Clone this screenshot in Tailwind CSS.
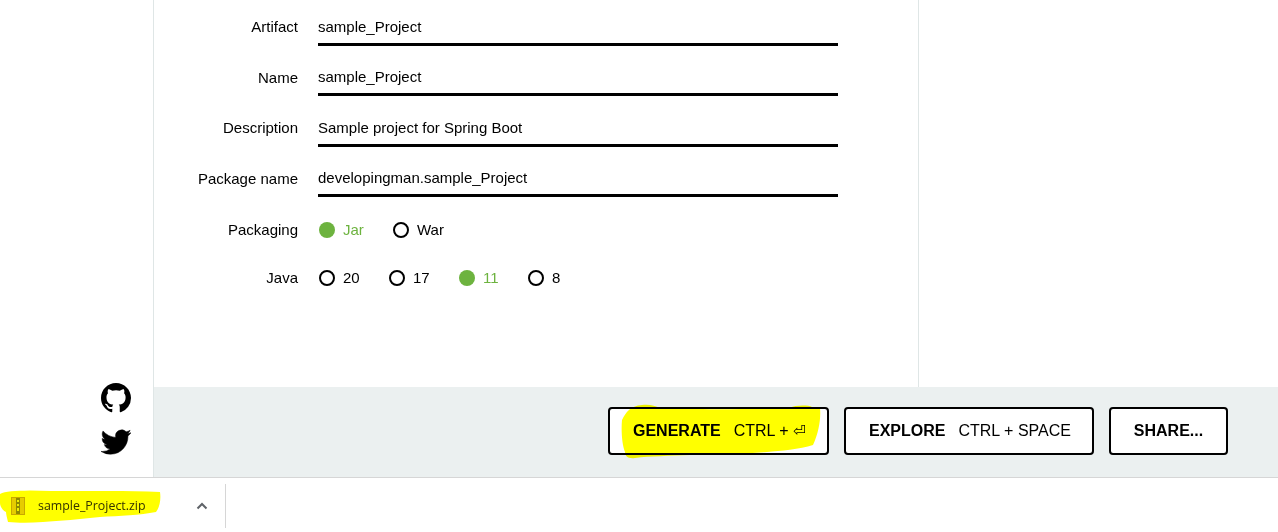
<!DOCTYPE html>
<html>
<head>
<meta charset="utf-8">
<script src="https://cdn.jsdelivr.net/npm/@tailwindcss/browser@4"></script>
</head>
<body class="relative h-[532px] w-[1278px] overflow-hidden bg-white font-['Liberation_Sans',Arial,sans-serif] text-black">
<div class="flex h-[477px]">
  <aside class="flex w-[154px] shrink-0 flex-col items-end border-r border-[#dfe6e6] pr-[22px] pt-[383px]">
    <svg class="h-[30px] w-[30px]" viewBox="0 0 16 16" fill="#000"><path d="M8 0C3.58 0 0 3.58 0 8c0 3.54 2.29 6.53 5.47 7.59.4.07.55-.17.55-.38 0-.19-.01-.82-.01-1.49-2.01.37-2.53-.49-2.69-.94-.09-.23-.48-.94-.82-1.13-.28-.15-.68-.52-.01-.53.63-.01 1.08.58 1.23.82.72 1.21 1.87.87 2.33.66.07-.52.28-.87.51-1.07-1.78-.2-3.64-.89-3.64-3.95 0-.87.31-1.59.82-2.15-.08-.2-.36-1.02.08-2.12 0 0 .67-.21 2.2.82.64-.18 1.32-.27 2-.27.68 0 1.36.09 2 .27 1.53-1.04 2.2-.82 2.2-.82.44 1.1.16 1.92.08 2.12.51.56.82 1.27.82 2.15 0 3.07-1.87 3.75-3.65 3.95.29.25.54.73.54 1.48 0 1.07-.01 1.93-.01 2.2 0 .21.15.46.55.38A8.013 8.013 0 0016 8c0-4.42-3.58-8-8-8z"/></svg>
    <svg class="mt-[14px] h-[30px] w-[30px]" viewBox="0 0 24 24" fill="#000" stroke="#000" stroke-width="0.4"><path d="M23.953 4.57a10 10 0 01-2.825.775 4.958 4.958 0 002.163-2.723c-.951.555-2.005.959-3.127 1.184a4.92 4.92 0 00-8.384 4.482C7.69 8.095 4.067 6.13 1.64 3.162a4.822 4.822 0 00-.666 2.475c0 1.71.87 3.213 2.188 4.096a4.904 4.904 0 01-2.228-.616v.06a4.923 4.923 0 003.946 4.827 4.996 4.996 0 01-2.212.085 4.936 4.936 0 004.604 3.417 9.867 9.867 0 01-6.102 2.105c-.39 0-.779-.023-1.17-.067a13.995 13.995 0 007.557 2.209c9.053 0 13.998-7.496 13.998-13.985 0-.21 0-.42-.015-.63A9.935 9.935 0 0024 4.59z"/></svg>
  </aside>
  <div class="flex min-w-0 flex-1 flex-col">
    <div class="flex h-[387px]">
      <main class="h-full w-[765px] border-r border-[#dfe6e6] text-[15px] leading-[18px]">
        <div class="flex h-[46px] items-end">
          <div class="w-[144px] pb-[10px] text-right">Artifact</div>
          <div class="ml-5 w-[520px] border-b-[3px] border-black pb-[7px]">sample_Project</div>
        </div>
        <div class="mt-[3px] flex h-[47px] items-end">
          <div class="w-[144px] pb-[9px] text-right">Name</div>
          <div class="ml-5 w-[520px] border-b-[3px] border-black pb-[7px]">sample_Project</div>
        </div>
        <div class="mt-[4px] flex h-[47px] items-end">
          <div class="w-[144px] pb-[10px] text-right">Description</div>
          <div class="ml-5 w-[520px] border-b-[3px] border-black pb-[7px]">Sample project for Spring Boot</div>
        </div>
        <div class="mt-[3px] flex h-[47px] items-end">
          <div class="w-[144px] pb-[9px] text-right">Package name</div>
          <div class="ml-5 w-[520px] border-b-[3px] border-black pb-[7px]">developingman.sample_Project</div>
        </div>
        <div class="mt-[24px] flex h-[18px] items-center">
          <div class="w-[144px] text-right">Packaging</div>
          <div class="ml-[21px] flex items-center">
            <span class="h-4 w-4 rounded-full bg-[#6db33f]"></span><span class="ml-2 w-[50px] text-[#6db33f]">Jar</span>
            <span class="h-4 w-4 rounded-full border-2 border-black"></span><span class="ml-2">War</span>
          </div>
        </div>
        <div class="mt-[30px] flex h-[18px] items-center">
          <div class="w-[144px] text-right">Java</div>
          <div class="ml-[21px] flex items-center">
            <span class="h-4 w-4 rounded-full border-2 border-black"></span><span class="ml-2 w-[38px]">20</span>
            <span class="ml-2 h-4 w-4 rounded-full border-2 border-black"></span><span class="ml-2 w-[38px]">17</span>
            <span class="ml-2 h-4 w-4 rounded-full bg-[#6db33f]"></span><span class="ml-2 w-[37px] text-[#6db33f]">11</span>
            <span class="ml-2 h-4 w-4 rounded-full border-2 border-black"></span><span class="ml-2">8</span>
          </div>
        </div>
      </main>
    </div>
    <footer class="flex h-[90px] items-start justify-end gap-[15px] bg-[#ebf0f0] pr-[50px] pt-[20px] text-[16px]">
      <button class="flex h-[48px] w-[221px] items-center rounded border-2 border-black bg-white pl-[23px]"><b>GENERATE</b><span class="ml-[13px]">CTRL + <span class="font-['DejaVu_Sans'] text-[15px]">⏎</span></span></button>
      <button class="flex h-[48px] w-[250px] items-center rounded border-2 border-black bg-white pl-[23px]"><b>EXPLORE</b><span class="ml-[13px]">CTRL + SPACE</span></button>
      <button class="flex h-[48px] w-[119px] items-center justify-center rounded border-2 border-black bg-white"><b>SHARE...</b></button>
    </footer>
  </div>
</div>
<div class="flex h-[55px] items-center border-t border-[#d6d6d6] bg-white pb-[1px] pt-[2px]">
  <svg class="ml-[11px] h-[18px] w-[14px]" viewBox="0 0 14 18"><rect x="0.5" y="0.5" width="13" height="17" fill="#e6cc30" stroke="#c8a820"/><rect x="5" y="1" width="4" height="16" fill="#8f8a50"/><rect x="6" y="3" width="2" height="2" fill="#eee"/><rect x="6" y="7" width="2" height="2" fill="#eee"/><rect x="6" y="11" width="2" height="3" fill="#eee"/></svg>
  <span class="ml-[13px] mt-[2px] w-[145px] font-['Open_Sans'] text-[12.4px] text-[#333]">sample_Project.zip</span>
  <svg class="ml-[13px] h-[8px] w-[12px]" viewBox="0 0 12 8" fill="none" stroke="#5f6368" stroke-width="2"><path d="M1.5 6.5 6 2l4.5 4.5"/></svg>
  <div class="ml-[17px] h-[44px] w-px bg-[#d6d6d6]"></div>
</div>
<svg class="pointer-events-none absolute left-0 top-0 mix-blend-multiply" width="1278" height="532" viewBox="0 0 1278 532" fill="#ffff00">
  <path d="M622 420 C626 412 630 406 642 405 C650 404 655 406 660 408 C700 410 760 409 790 408 C795 405 808 405 812 407 L820 408 C821 418 819 432 813 445 C800 449 780 451 767 452 C740 454 715 455 690 455 C670 456 650 456 635 458 C628 459 625 456 625 452 C622 445 621 430 622 420 Z"/>
  <path d="M0 494 C5 491 15 491 30 490.5 C70 492 120 490 160 492 C161 499 160 507 156 512 C140 515 120 516 100 517 C80 519 60 521 43 522 C30 523 18 523 8 522 C7 518 6 514 6 512 C2 510 0 506 0 503 Z"/>
</svg>
</body>
</html>
